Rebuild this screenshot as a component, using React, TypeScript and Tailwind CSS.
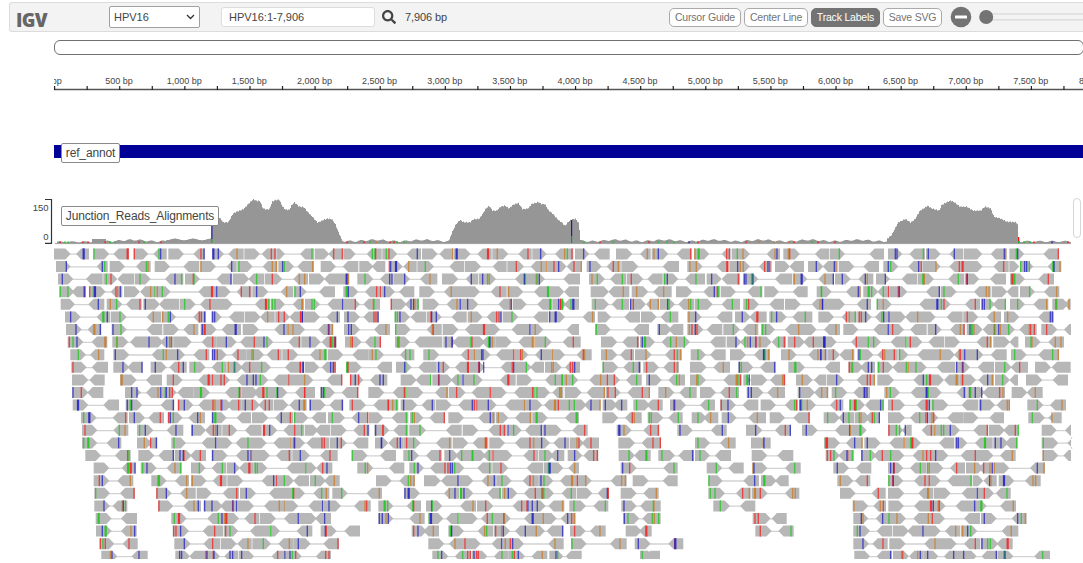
import React from "react";
import { FaSearch } from "react-icons/fa";

/*
 * Packed alignments. Every row is split by "|" into windows of the view.
 * ">a-b" is a forward read, "<a-b" its reverse mate, in thirds of a pixel;
 * r, g, b, o are mismatched bases, upper case for a wide run.
 */
const UPPER_WINDOWS = [0, 780, 1560, 2340];
const LOWER_WINDOWS = [0, 1020, 2070];

const UPPER = [
  ">42-92 <108-147 B131 >160-208 g162 <220-267 R263 >281-325 r283 <340-380 g357 b362 >385-432 <460-495 r483 b492 >517-552 B520 b535 <565-611 o591 >613-660 <665-708 r694 r705 >709-735 | <0-43 g36 >45-88 <85-128 r101 r127 >130-167 <200-245 g217 g225 r227 >247-292 g259 r267 <320-363 b352 >366-413 <418-460 o458 >462-512 B470 <532-575 R564 >577-625 o592 <655-695 r684 >697-740 b722 <765-820 | o14 g22 r36 >45-88 b71 <102-149 >168-217 <240-272 o262 >275-325 o282 b295 <350-395 r392 >402-448 o405 G416 <485-512 r500 r508 >515-570 g532 o549 <620-660 o645 b651 >670-720 o685 r689 <765-808 | >30-75 g58 <148-192 >204-247 b226 b231 <268-315 g310 >318-362 b325 <388-430 b403 >432-487 <512-560 b553 o557 >568-613 g589 b593 <670-717 r715",
  ">48-92 b79 <170-203 b187 g194 >209-255 <288-332 g319 o324 >344-390 <430-478 >481-528 o483 <560-590 b575 >592-638 g597 <668-712 o697 o709 >715-762 b728 g733 <772-822 | o38 >62-108 <128-175 >178-220 <215-256 >268-308 r268 b272 B288 <310-350 o326 >352-402 g376 <448-493 >495-543 <578-620 >622-672 r649 <692-738 o724 o740 >742-800 r762 b776 | <20-65 r42 o64 >80-125 b90 <140-182 r160 o175 >184-235 <308-357 >382-428 o390 o409 <470-505 R502 >508-570 b533 o541 o550 <597-635 r614 b624 r629 >645-690 <688-732 >744-790 b769 | <8-53 b43 o48 >56-103 <130-177 >190-235 b205 g212 <265-305 b296 r304 >307-362 o348 <388-428 r418 R428 >430-488 <520-566 r551 >568-598 >600-640 g602 b614 b620 g628 <683-724 G700 b702 o720",
  ">54-100 b67 <138-188 >190-232 g199 r213 <232-283 >285-332 g300 <375-430 b405 g425 >435-480 r460 g462 <530-575 b573 >578-628 <625-672 g650 >674-727 r697 <760-804 o778 o794 | >27-75 <72-148 B140 o145 >172-220 g195 <240-278 b269 b276 >280-330 b314 <360-412 o390 >426-475 <497-535 b514 >537-588 b548 g563 o568 <645-675 G675 b673 >677-735 g709 o712 b718 | <10-60 >87-135 o96 g112 <150-198 g187 >200-250 r214 <262-308 >310-355 g314 b322 <375-435 g408 >440-485 b455 <485-540 r535 >550-595 b553 b558 G576 b579 <645-697 >699-742 o703 B725 <775-822 | o15 b40 >45-92 b67 <115-160 b136 o142 >168-210 b196 <245-292 >294-342 G310 o313 <385-433 g415 >435-478 r440 b442 <510-558 >570-615 R577 G583 <655-702 r685",
  ">58-103 g61 g84 <95-138 r132 b134 >148-197 r149 g160 B165 <212-247 r228 o233 b241 >252-300 <300-345 o332 g345 >347-392 o352 g367 <475-528 R516 b530 >530-572 <590-635 r604 >637-685 r629 b650 <722-760 o740 >763-800 g765 b781 | <57-105 >130-175 G140 b145 <195-243 r230 r242 >245-285 b254 <297-343 >358-405 <432-480 o454 >480-540 <572-620 r600 >622-670 o626 <702-743 G744 >745-793 | <12-57 >92-147 <145-208 o190 >215-265 o230 <280-335 o311 >348-397 <430-480 b463 r472 g475 >482-528 <562-607 g603 >613-657 <698-743 >770-815 g785 | g4 <78-122 b115 o120 >130-175 G146 g155 <172-208 g190 r206 >210-262 r235 b238 <318-360 b358 >362-410 g372 <462-512 o499 o507 >515-562 <560-595 >600-645 g629 <672-718 o710",
  ">62-105 <145-193 b175 >200-247 o211 g230 <258-305 r300 >310-360 b316 <357-418 >420-467 g434 <480-525 r510 >525-578 <645-690 R678 g686 g697 >692-735 g705 <758-792 o786 | o7 >15-60 g36 g43 <82-128 b128 >130-180 r166 <190-240 o220 g222 >272-320 r274 <315-357 b333 b341 o345 g354 >368-418 <440-480 o471 b481 >483-535 b503 <595-635 o630 b634 >638-680 <712-755 G751 >757-800 b776 r782 g787 | <12-57 r2 g8 g33 B40 >95-147 g106 <155-207 g187 b212 >210-258 r220 <258-298 o271 o295 >300-345 b323 g327 <355-403 o386 g392 >405-458 g415 <485-540 g517 >550-597 g560 r566 <628-672 >675-722 <755-780 o780 b788 | >0-75 b7 <110-153 b142 >170-215 g172 o190 <298-350 B352 >352-392 g364 r372 <435-480 r466 >484-525 b487 b493 g510 <518-558 g556 >570-615 g593 <640-685 o680 >697-745 r708 g710 <732-752 o747",
  ">75-122 b92 <170-210 G190 b202 >212-260 g240 <320-364 o340 >366-408 o368 g385 b391 <460-498 r478 r484 b494 >514-545 b518 b524 <567-612 >614-662 <660-704 o683 r716 >706-750 r733 <748-790 r782 b787 | r2 b8 >12-60 <80-120 b112 >132-180 b144 <190-237 r222 r228 b234 >284-330 g286 g292 b300 <332-378 >380-425 r393 b395 b409 <455-500 >503-548 o514 <560-605 r590 r597 b603 >608-655 g636 <700-745 b749 >748-795 B767 | <68-105 o98 >113-153 <193-240 >243-290 <302-355 g331 >382-425 o387 b407 <470-517 >525-572 b547 <568-620 R592 >628-680 g635 b650 <697-757 g736 >775-822 | <65-110 r79 o88 g106 >112-155 r118 r124 b137 <165-206 g186 b191 b207 >208-258 <255-300 o293 >300-347 <380-428 >430-475 r442 <500-543 o523 >552-598 o563 <655-702 b691 b697",
  ">78-125 b108 <143-184 O163 b181 >215-260 b219 g243 <320-367 >370-417 <430-475 o462 >482-530 b487 R494 <545-603 B587 >608-657 <703-745 b732 o745 >747-795 o759 | <55-100 r85 b87 o97 >132-180 b146 b154 <222-270 o258 >285-332 g287 <380-425 o397 r400 >428-475 <495-550 >550-600 R552 <635-690 b690 >692-730 o706 | <20-57 >105-152 g109 <220-267 >292-335 b298 <325-370 >382-430 o388 r396 b406 r411 <440-487 >490-540 g520 <548-595 o587 >603-645 g608 g617 <675-720 o716 >720-770 | <12-60 o48 >70-115 <160-205 b205 >207-252 r218 <270-320 >323-365 b347 <390-435 o421 r432 >440-488 b450 G455 o462 <488-535 r523 g525 b536 o541 >537-585 g566 <598-650 o628 r632 r643 >664-712 r680 <732-753",
  ">83-130 r88 g99 b111 <155-202 O196 >217-265 g230 o232 <270-325 b327 >325-370 <360-400 b380 g389 r394 >400-455 <485-530 r518 >530-590 b559 <600-645 r643 >645-700 b672 g681 <745-782 r778 | >4-62 b30 <65-110 R92 g97 r103 b106 >135-185 o152 r157 <195-243 g225 r241 >285-330 G294 o298 <343-427 >430-468 b438 r455 b457 <458-510 g512 >512-555 r516 <545-587 G567 b570 o577 >587-635 <655-702 o697 o702 >705-755 g736 | <8-62 r40 >123-172 <187-237 r233 b247 >240-285 G255 <305-345 g332 >335-390 o349 g373 <450-497 >500-545 b528 <540-588 g555 o563 b571 b588 >590-635 r588 o600 <635-678 r673 g656 >683-735 r704 <730-800 r760 B793 | >10-50 B13 <93-145 r109 >145-183 g145 g161 <212-258 g258 >260-307 r271 <325-372 >374-420 <470-515 r502 o512 >520-570 <568-595 >615-662 g633 o636 <685-732 o706 o723",
  ">91-138 g115 <150-193 o176 >220-268 b226 <335-380 g370 o379 >380-435 b413 <460-508 r499 >515-560 b518 b524 r532 <575-620 r594 >620-672 o636 g640 <680-725 r715 >727-775 r745 | <30-80 o60 G76 >83-130 <157-205 >205-252 o217 g228 <300-343 g317 g330 >370-418 g387 <482-520 r505 o523 >520-572 b545 b549 <588-640 r641 >643-685 r662 o667 <705-755 b724 o757 >757-795 | <50-95 r70 o74 >123-172 o139 <180-222 r214 >225-275 o258 <315-365 r343 g352 o362 >392-438 g414 <450-497 >510-558 <582-630 B612 g615 o626 >663-710 o687 <745-799 o774 b782 b797 | b3 o16 >22-60 r40 <58-103 o98 >112-160 b117 g121 <172-233 r188 o194 r223 >235-265 g239 <292-362 o361 >362-405 <402-432 o418 r421 b434 >434-490 b472 <512-560 >573-620 g584 <655-717 g698 o715",
  ">94-140 r99 <155-204 >220-268 b249 <262-308 b306 >332-380 b346 <388-440 r416 b430 >448-497 g464 <515-560 g547 o565 >562-608 b584 g582 <600-645 r629 >645-693 g665 <735-792 r781 b789 | r1 b10 >14-58 <65-108 b92 b100 r105 >138-185 G142 r144 <230-276 >288-335 b314 g317 <355-410 b416 >412-450 r430 <465-507 R504 >508-555 r536 b538 b551 <602-638 r637 b641 >640-695 g679 <690-732 >735-785 o755 o760 | <15-60 r31 r38 b44 >127-175 g130 <190-243 g220 b238 >250-297 r260 <310-357 r343 o352 >390-440 <460-510 o490 >535-580 b538 g544 <600-647 b644 >685-735 G706 | <15-60 >85-130 r88 o94 g98 <120-165 b145 b155 >172-220 g176 r190 <217-265 g259 o265 >267-320 g288 <350-405 b410 >407-450 r427 b429 <473-522 >525-575 g554 <572-624 r599 >645-693 <695-752",
  ">96-145 <148-194 >240-290 O245 <318-366 >380-428 r400 <475-518 R506 r518 >520-570 r543 r553 <590-630 b621 b640 >630-685 b648 g661 <700-748 r747 >750-820 | o14 <80-127 r125 >150-190 r152 b166 r176 <210-262 b240 b250 >302-350 <347-393 g392 >397-458 b416 r417 <452-487 g474 >490-548 b489 g522 <600-647 R625 >650-697 <735-788 g766 g787 | g6 >9-55 o19 g38 <88-140 o122 >140-180 r142 r163 <198-245 g230 >258-305 b268 <325-375 g350 o358 >390-438 o410 g414 <490-545 O530 g534 r541 >550-573 G562 b568 >573-622 <630-676 o668 r673 >708-758 o727 <762-798 | >20-72 b50 <110-165 r142 r151 o163 >172-222 <280-318 b310 g320 >318-372 R330 <372-418 O410 >418-468 o427 r428 <475-522 b503 o517 >525-570 g548 <568-594 >618-667 <698-744",
  ">97-145 b99 r124 <142-190 >255-303 b275 b291 <318-360 o354 b362 g376 >362-410 b379 r389 r397 <412-460 >460-510 G483 <555-605 g597 r599 >605-655 <640-687 R670 g681 >687-742 g711 b713 <765-825 r794 | r14 >60-105 b65 b71 g74 <125-175 r173 >205-253 <278-318 r313 g318 >320-370 <405-445 o441 >447-497 r470 <515-570 >572-620 r571 <642-702 r698 g702 >703-750 g711 <757-790 g779 o783 | o4 >14-65 <80-135 o133 >137-182 r144 r166 <202-270 r247 o268 >295-343 o317 <358-410 g390 >420-468 <480-537 r508 g530 >560-610 b565 b574 <622-675 o653 >713-765 b719 <762-805 o785 o802 | >35-82 g47 <100-150 B134 o137 b141 >193-240 o200 g211 <272-318 B320 >318-365 g325 <410-440 b433 >442-495 r449 g452 b466 b485 <488-555 r539 o549 >575-622 <620-668 o646",
];

const LOWER = [
  ">98-145 B114 <190-237 >257-307 b262 g271 b275 <362-403 b400 >413-460 r416 b433 <475-547 r519 o525 r543 b546 >549-575 <560-605 r596 >605-660 b616 r637 <655-700 r676 r688 >702-745 <748-800 b778 O793 >808-857 b811 <868-910 b907 >928-978 r937 <1000-1075 r1045 | r25 o38 g50 >62-112 b71 <125-165 b157 >167-215 <235-290 b277 r283 r291 >293-350 b325 <375-430 >430-487 o433 b450 <492-540 O525 r535 >540-620 g568 g583 <612-662 b633 o660 >668-712 b676 <700-742 b725 >760-810 g770 <800-848 r835 >870-918 r881 b884 <960-1005 g986 >1020-1068 r1024 b1044 | <38-85 >92-138 <165-203 g194 r200 >207-258 B212 g215 o232 <300-340 r320 b331 >357-405 g361 R375 g379 <405-462 b452 g459 >474-525 r487 <560-602 R590 b598 >604-655 g609 <695-745 b752 >747-795 <800-840 o832 o838 >892-940 g922 <960-1008 o996",
  ">123-170 g131 B148 <218-263 r257 >267-315 b283 <325-372 r361 >383-428 r386 b391 g400 <445-495 b473 o481 >515-560 b518 G526 <590-633 >636-685 <705-760 b724 r751 >762-805 g764 <815-858 >864-915 g877 <935-985 b956 r983 >987-1030 | <35-85 g79 >90-130 g97 o103 <148-195 r193 >205-252 <295-345 b331 o340 >347-385 o355 <405-455 o451 >457-503 G470 <555-597 G590 >667-715 <735-785 r757 o763 >803-850 g808 g814 <865-908 g895 >935-980 g954 <970-1015 o992 >1025-1070 b1045 | <55-108 o82 >119-165 <190-240 r237 >281-330 g293 <325-372 b340 g357 >374-420 g388 o393 <405-450 r427 g433 b448 >474-525 <540-595 g569 r588 b593 >597-625 o606 r611 <652-700 >700-745 <778-822 >895-945 g907 <955-995 o966",
  ">126-172 r135 <220-265 g238 o255 >291-340 g299 b316 <380-430 b408 >453-498 b457 <495-545 r520 o526 b532 >547-592 r568 <615-665 >668-712 R672 b689 <730-792 r764 g785 >794-835 <825-870 >872-920 <940-988 r973 b984 >1003-1048 b1007 r1029 | r9 <40-85 g79 >88-138 g120 <198-245 >248-295 <325-380 r361 r373 b384 >385-425 g401 <435-485 b484 >487-545 b495 <577-623 r614 >710-755 B718 o732 <790-838 r812 r835 >892-938 b900 <993-1040 b1027 | >48-97 b77 <135-183 r166 b181 >216-263 b229 <315-360 b359 >362-410 o361 G391 >474-520 r477 g499 g509 <515-545 b526 <575-612 r604 o614 >614-690 g634 g641 b661 <730-775 r772 >777-825 <820-866 r856 g865 >935-980 <1005-1023",
  ">126-172 g131 G145 <200-244 b236 >291-335 o313 <320-352 r332 b349 >394-438 g402 <485-530 b527 >530-577 <587-627 g624 >627-680 <700-752 o753 r762 b764 >755-795 <800-868 r846 r853 >870-920 b892 r904 <938-985 >1005-1045 b1024 | b5 <25-70 r52 b61 >70-122 r80 g101 <168-215 o209 >218-265 <278-325 O317 r318 >328-375 <405-460 r450 o461 >460-510 b485 <520-568 b555 >570-612 o591 r597 <605-657 r633 >715-765 <785-843 r819 r841 >945-990 g954 <1020-1067 o1046 | >63-110 o100 b102 <85-122 >282-330 G288 R291 <348-398 b374 o396 >403-452 b412 <478-522 o523 >525-573 g542 R547 <627-673 b680 b685 >675-712 <735-788 G765 >790-835 b796 b813 <825-863 g860 >935-985 g940 <1012-1023",
  ">136-183 <225-272 r263 g267 >295-343 <355-402 b400 >404-455 b420 r432 b430 <450-498 r481 >515-563 b518 <588-632 b624 b633 >634-690 o634 <708-755 r748 >757-810 b781 <840-893 r870 >935-983 g937 <1020-1068 | >70-117 g87 b95 <138-185 r180 >193-235 b209 <225-273 g245 G277 >275-318 <308-337 g328 r339 >340-397 <430-475 r462 >477-522 g495 <510-553 b533 >563-607 b584 <610-655 r641 r652 >716-765 g747 <762-812 G799 >835-885 g846 <895-942 b938 >945-990 g960 <1005-1053 | >65-112 <142-190 >287-330 r292 r302 g312 <325-372 b351 r353 g367 >393-440 b396 g421 <430-480 r457 g482 >480-523 <548-600 o579 r590 >600-655 r602 b617 <692-738 r736 >738-790 <810-857 o847 >937-985 o940 <1000-1023",
  ">161-208 <245-287 G264 R272 b285 >302-350 g308 b321 <380-425 o405 g422 >453-497 g478 <515-558 g547 >560-600 b584 <597-640 R628 g646 g652 >640-682 <740-795 g797 >797-830 <828-877 r848 b861 >952-1000 g976 o983 | <27-73 >88-132 g103 b114 <150-200 r195 r204 >200-253 b211 b217 g224 <292-335 g329 >337-385 r363 <440-490 >492-550 g505 B509 <565-597 o584 >722-770 b728 r749 <850-893 g882 >980-1027 g1009 | <-5-41 >67-112 o69 b72 <165-212 g194 >310-357 b322 <378-424 >474-520 b482 r493 b491 <540-590 g571 >592-640 g593 o598 <660-705 r680 >708-760 o734 <745-787 r761 o780 b787 >790-838 o793 <900-945 b922 o942",
  ">161-208 r178 b187 <232-280 o271 >334-380 r355 G357 <405-447 o440 >453-500 o457 <518-560 R543 >562-610 <665-710 b701 r710 >712-762 g733 <760-807 >810-858 g826 <852-899 o883 >1008-1055 | <58-105 g85 o92 o102 >132-182 <183-235 b234 >235-280 <305-350 o324 b343 >350-395 g366 <428-475 r450 o460 >475-520 b483 g492 <540-590 O576 r592 >590-635 o617 <692-740 o725 o736 >758-806 <848-893 >985-1028 g987 | <40-87 b74 >93-140 G103 <135-176 >322-370 o331 <375-421 r412 >474-520 g477 r488 b490 <552-598 r585 r598 >600-632 <652-727 g723 >729-760 <760-800 b779 o783 >806-853 B822 <885-932 o909 o917",
  ">163-210 g167 <240-285 r282 >348-395 r351 b379 <420-467 o440 >470-515 <548-597 r590 >600-648 b619 <687-760 g758 r761 >760-795 <820-868 g845 o859 >877-923 g905 <980-1026 o1018 | >72-120 b75 B86 <192-238 o208 b225 >240-280 G243 b252 <322-363 g360 >365-412 o374 b385 <432-490 r466 G490 r486 >490-522 <545-588 g574 >590-637 <653-687 b682 r685 >722-770 <790-836 o829 >985-1035 g991 g1005 | <18-62 r38 o58 >65-113 O75 r91 <165-208 o188 o196 >330-377 <425-467 r445 >474-523 <565-610 g593 o596 >612-662 <695-740 b742 >743-792 r763 <797-842 g831",
  ">163-210 b192 <218-262 o247 b250 g256 >354-400 r357 <430-483 o462 b475 >491-548 b494 b516 <540-585 b578 r580 b589 >587-642 <672-730 o718 >732-775 o732 <805-850 b848 >852-903 b867 <942-992 o975 r980 >1015-1060 G1034 g1043 | <80-123 g98 r101 >138-187 b155 g157 <240-288 o279 >291-340 r317 <398-442 r425 r441 b444 >445-497 b457 b472 <505-553 o548 >568-618 g582 <640-685 g676 >724-770 b732 <780-842 g820 o822 >1000-1050 g1021 | <30-76 >368-415 o372 <430-468 o451 r460 >475-522 <552-600 R603 b610 >602-647 o625 r628 <677-735 b734 >735-770 G754 <810-858 o850",
  ">167-215 G176 <243-291 >394-440 g403 R417 <502-550 g535 b546 >550-597 o553 R559 <613-657 r645 >659-708 <732-775 b775 >777-830 <825-873 b854 >1015-1060 b1018 b1027 o1038 b1045 | <88-134 o120 >145-190 g148 B153 <198-235 g234 >236-293 <303-345 r322 g337 >345-392 b372 o373 <432-480 B458 >480-530 o490 <542-587 b563 r575 o583 >730-778 b733 g744 <787-842 g817 o823 g836 | >68-122 r75 r85 <125-170 >370-415 b394 o399 <437-480 b458 g477 >480-528 o501 <550-600 o595 r607 >600-645 <702-750 >753-800 b763 <845-890 b863 g874 o886",
  ">168-215 b187 G197 <243-290 o273 b284 >398-447 r401 r408 b422 <488-550 r524 >552-595 r557 g570 <630-690 g692 >692-720 <770-817 b802 >842-890 b856 r859 <913-960 | >95-140 r101 b114 <130-177 o160 >205-252 G212 b215 <293-340 o314 g320 >342-390 r347 o365 b370 <405-450 b436 >450-495 o469 <500-550 b548 >570-617 r584 <630-677 o660 >737-785 <777-815 R799 | >76-125 r91 <145-191 g183 >370-420 g382 b390 <440-487 >489-537 <532-580 b579 >580-632 <645-690 o677 >692-742 o698 b713 g722 <815-865 o844",
  ">179-223 r181 g189 r196 <248-293 r267 >403-452 b433 <490-540 r518 >542-590 <592-635 o624 >637-693 g670 <715-760 o748 >760-812 b775 <850-897 r894 | >145-193 <207-255 o225 r255 >255-302 <335-365 b365 >367-432 o376 r391 b398 <505-551 o525 >573-620 g576 <690-740 o720 >764-812 b775 <865-910 r884 B886 | >370-417 b399 <427-473 r459 >478-527 <583-630 o615 >630-680 <702-750 r736 >752-805 b756 g773 g781 <800-848 R833",
  ">184-232 o211 b216 <275-323 b297 >406-450 b419 b425 <448-500 r498 >500-540 b501 r520 b522 <553-595 b570 b578 >597-642 b605 <695-735 r713 b735 >737-785 b750 g757 r767 <828-873 r857 r867 | >157-205 g174 b185 <225-273 g248 r263 r271 >275-322 b282 r290 r295 <342-385 g366 >385-435 g397 r403 b415 <455-502 o487 >508-550 b528 g533 <557-605 >780-820 g787 <795-840 | >373-420 <440-485 b482 >489-537 r518 o515 <537-580 o563 b571 >580-625 b593 <642-690 b671 >690-740 b701 <755-802 b799 >803-850 G823 b825 <913-960 g938",
];

const BASE_COLORS: Record<string, string> = {
  r: "#f32626",
  g: "#22c622",
  b: "#2626c4",
  o: "#cc7c28",
};

function AlignmentRow({ data, windows, y }: { data: string; windows: number[]; y: number }) {
  const lines: string[] = [];
  const reads: string[] = [];
  const bases: { x: number; wide: boolean; color: string }[] = [];
  let tip: number | null = null;
  data.split("|").forEach((part, i) => {
    const toX = (v: string) => 40 + (windows[i] + Number(v)) / 3;
    for (const token of part.trim().split(/\s+/)) {
      const read = token.match(/^([<>])(-?\d+)-(-?\d+)$/);
      if (read) {
        const a = toX(read[2]);
        const b = toX(read[3]);
        if (read[1] === ">") {
          reads.push(`M${a} ${y}H${b - 5.3}L${b} ${y + 5.5}L${b - 5.3} ${y + 11}H${a}Z`);
          tip = b;
        } else {
          reads.push(`M${b} ${y}V${y + 11}H${a + 5.3}L${a} ${y + 5.5}L${a + 5.3} ${y}Z`);
          if (tip !== null && tip < a) lines.push(`M${tip - 1} ${y + 5.8}H${a + 1}`);
          tip = null;
        }
      } else if (token) {
        const key = token[0].toLowerCase();
        bases.push({ x: toX(token.slice(1)), wide: key !== token[0], color: BASE_COLORS[key] });
      }
    }
  });
  return (
    <g>
      <path d={lines.join("")} stroke="#d2d2d2" strokeWidth="1.3" />
      {reads.map((d, i) => (
        <path key={i} d={d} fill="#b7b7b7" />
      ))}
      {bases.map((m, i) => (
        <rect key={i} x={m.x - (m.wide ? 1.1 : 0.7)} y={y} width={m.wide ? 2.2 : 1.35} height="11" fill={m.color} opacity={m.wide ? 0.92 : 0.78} />
      ))}
    </g>
  );
}

const PEAKS: [number, number][][] = [
  ([[576, 262], [598, 262], [610, 277], [625, 277], [640, 250], [655, 243], [670, 238], [685, 222], [700, 208], [710, 213], [720, 213], [728, 233], [735, 238], [748, 238], [757, 215], [765, 211], [778, 209], [787, 228], [795, 238], [808, 240], [815, 225], [823, 217], [838, 230], [852, 232], [865, 248], [880, 263], [893, 278], [910, 270], [922, 266], [935, 267], [945, 280], [955, 305], [965, 328], [970, 335]] as [number, number][]).map(([x, y]) => [20 + x / 3, 130 + y / 3]),
  ([[208, 150], [217, 125], [228, 103], [240, 90], [252, 97], [270, 97], [280, 88], [298, 86], [308, 72], [318, 55], [328, 48], [338, 62], [350, 62], [362, 50], [375, 47], [387, 55], [400, 44], [415, 39], [428, 58], [445, 55], [455, 42], [475, 36], [485, 42], [495, 42], [505, 60], [520, 73], [535, 90], [545, 97], [555, 108], [565, 95], [575, 88], [588, 87], [596, 100], [600, 130]] as [number, number][]).map(([x, y]) => [380 + x / 3, 190 + y / 3]),
  ([[440, 148], [455, 135], [468, 110], [475, 97], [497, 87], [512, 98], [525, 88], [540, 62], [552, 55], [563, 47], [575, 55], [598, 62], [605, 45], [618, 38], [632, 32], [645, 38], [660, 50], [680, 50], [700, 62], [722, 62], [735, 50], [752, 55], [762, 80], [780, 85], [800, 95], [828, 97], [835, 105]] as [number, number][]).map(([x, y]) => [740 + x / 3, 190 + y / 3]),
];

function coverageTop(x: number): number {
  for (const peak of PEAKS) {
    if (x < peak[0][0] || x > peak[peak.length - 1][0]) continue;
    const i = Math.max(1, peak.findIndex((p) => p[0] >= x));
    const [x0, y0] = peak[i - 1];
    const [x1, y1] = peak[i];
    return y0 + ((y1 - y0) * (x - x0)) / (x1 - x0) + 0.5 * Math.sin(x * 2.3);
  }
  if (x > 1020) return 241.4 + 0.7 * Math.sin(x * 0.5);
  if (x > 92 && x < 106) return 239;
  if (x < 92) return 241.8 + 0.5 * Math.sin(x * 0.5);
  if (x > 166 && x < 212) return 239.4 + 0.8 * Math.sin(x * 0.35);
  return 240.6 + 0.7 * Math.sin(x * 0.13) + 0.7 * Math.sin(x * 0.57);
}

const COVERAGE_MARKS =
  "r60 g65 g68 r83 r88 r105 g110 g115 r139 g144 r161 r347 r364 g370 o376 r390 r394 g397 g404 g584 r600 g613 r649 g658 g667 g674 b689 r698 r746 o759 o774 o789 r794 g812 r818 r835 g1024 g1030 r1034 b1052 r1068";

function Tracks() {
  let area = "M57 243.3";
  for (let x = 57; x < 1071; x += 1) area += `V${coverageTop(x + 0.5).toFixed(1)}H${x + 1}`;
  area += "V243.3Z";
  return (
    <svg className="block shrink-0" width="1083" height="369" viewBox="0 190 1083 369">
      <path d="M45 199.5H51.5V243.3H45" fill="none" stroke="#333" strokeWidth="1.2" />
      <g fontFamily="Liberation Sans, Arial, sans-serif" fontSize="9.5" fill="#444" textAnchor="end">
        <text x="48.5" y="210.5">150</text>
        <text x="48.5" y="240">0</text>
      </g>
      <path d={area} fill="#969696" />
      <path d="M55 243.6H1071" stroke="#8a8a8a" strokeWidth="0.8" />
      {COVERAGE_MARKS.split(" ").map((m) => (
        <rect key={m} x={Number(m.slice(1)) - 0.7} y={241.4} width="1.5" height="1.8" fill={BASE_COLORS[m[0]]} />
      ))}
      <rect x="211.2" y="225" width="1.3" height="14" fill="#22229c" />
      <rect x="211.2" y="239" width="1.3" height="4" fill="#28ac28" />
      <rect x="571" y="220" width="1.2" height="16" fill="#1c1ca8" />
      <rect x="571" y="236" width="1.2" height="7" fill="#208860" />
      <rect x="1018" y="237" width="1.3" height="4" fill="#ff1010" />
      <rect x="1018" y="241" width="1.3" height="2.3" fill="#28ac28" />
      {UPPER.map((row, i) => (
        <AlignmentRow key={i} data={row} windows={UPPER_WINDOWS} y={248.4 + i * 12.6} />
      ))}
      {LOWER.map((row, i) => (
        <AlignmentRow key={i + 12} data={row} windows={LOWER_WINDOWS} y={248.4 + (i + 12) * 12.6} />
      ))}
    </svg>
  );
}

function Ruler() {
  const ticks = Array.from({ length: 32 }, (_, i) => i);
  return (
    <svg className="ml-[54px] mt-[17px] block shrink-0" width="1029" height="20" viewBox="0 0 1029 20">
      <path d="M0 17.5H1029" stroke="#555" strokeWidth="1.3" />
      {ticks.map((i) => (
        <rect key={i} x={i * 32.56} y="14" width="1.2" height="4" fill="#222" />
      ))}
      {ticks
        .filter((i) => i % 2 === 0)
        .concat(32)
        .map((i) => (
          <text key={i} x={i === 0 ? -1 : i === 32 ? 1042.5 : i * 32.56} y="11.7" textAnchor="middle" fontFamily="Liberation Sans, Arial, sans-serif" fontSize="9" fill="#444">
            {`${(i * 250).toLocaleString("en-US")} bp`}
          </text>
        ))}
    </svg>
  );
}

function ToolbarButton({ label, width, active }: { label: string; width: string; active?: boolean }) {
  return (
    <button
      className={`h-[19px] shrink-0 whitespace-nowrap rounded-[5px] border text-center text-[10.5px] leading-[17px] tracking-[-0.2px] ${width} ${
        active ? "border-[#737373] bg-[#737373] text-white" : "border-[#aaa] bg-white text-[#737373]"
      }`}
    >
      {label}
    </button>
  );
}

function Toolbar() {
  return (
    <header className="ml-[9px] mt-[2px] flex h-[30px] shrink-0 items-center rounded-l-[3px] border-y border-l border-[#dcdcdc] bg-[#f3f3f3] text-[#444]">
      <span className="ml-[6px] mt-[5px] w-[92px] shrink-0 font-['Open_Sans',sans-serif] text-[18.5px] font-extrabold leading-[18px] tracking-[-0.7px] text-[#666]">IGV</span>
      <div className="ml-[1px] flex h-[22px] w-[91px] shrink-0 items-center justify-between rounded-[2px] border border-[#a0a0a0] bg-white pl-[4px] pr-[4px] text-[11px]">
        HPV16
        <svg width="9" height="6" viewBox="0 0 9 6">
          <path d="M1 1L4.5 4.5L8 1" fill="none" stroke="#333" strokeWidth="1.3" />
        </svg>
      </div>
      <div className="ml-[21px] flex h-[20px] w-[154px] shrink-0 items-center rounded-[3px] border border-[#ddd] bg-white pl-[7px] text-[11px]">HPV16:1-7,906</div>
      <FaSearch className="ml-[7px] shrink-0 text-[#444]" size={14} />
      <span className="ml-[9px] w-[264px] shrink-0 text-[11px] tracking-[-0.1px]">7,906 bp</span>
      <div className="flex shrink-0 gap-[3px]">
        <ToolbarButton label="Cursor Guide" width="w-[72px]" />
        <ToolbarButton label="Center Line" width="w-[64px]" />
        <ToolbarButton label="Track Labels" width="w-[69px]" active />
        <ToolbarButton label="Save SVG" width="w-[59px]" />
      </div>
      <svg className="ml-[8px] shrink-0" width="133" height="22" viewBox="0 0 133 22">
        <circle cx="11" cy="11" r="10.3" fill="#737373" />
        <rect x="5" y="9.5" width="12" height="3" rx="0.6" fill="#fff" />
        <rect x="36" y="7.3" width="98" height="7.2" fill="#dadada" />
        <rect x="36" y="8.6" width="98" height="4.6" fill="#f3f3f3" />
        <circle cx="36.2" cy="11" r="7" fill="#737373" />
      </svg>
    </header>
  );
}

function TrackLabel({ children }: { children: string }) {
  return <span className="whitespace-nowrap rounded-[2px] border border-[#8a8a8a] bg-white text-center text-[12px] leading-[18px] tracking-[-0.15px] text-[#444]">{children}</span>;
}

export default function App() {
  return (
    <main className="flex h-[563px] w-[1083px] flex-col overflow-hidden bg-white font-['Liberation_Sans',Arial,sans-serif]">
      <Toolbar />
      <div className="ml-[54px] mt-[8px] h-[15px] w-[1029.5px] shrink-0 rounded-[6px] border-[1.5px] border-[#707070] bg-white" />
      <Ruler />
      <section className="relative ml-[54px] mt-[53px] h-[12.5px] shrink-0 bg-[#000096]">
        <div className="absolute left-[7px] top-[-2px] grid h-[19px] w-[59px]">
          <TrackLabel>ref_annot</TrackLabel>
        </div>
      </section>
      <section className="relative mt-[32.5px] shrink-0">
        <Tracks />
        <div className="absolute left-[61px] top-[16px] grid h-[19px] w-[158px]">
          <TrackLabel>Junction_Reads_Alignments</TrackLabel>
        </div>
        <div className="absolute left-[1073px] top-[8px] h-[40px] w-[8px] rounded-[4px] border border-[#d6d6d6] bg-white" />
      </section>
    </main>
  );
}
